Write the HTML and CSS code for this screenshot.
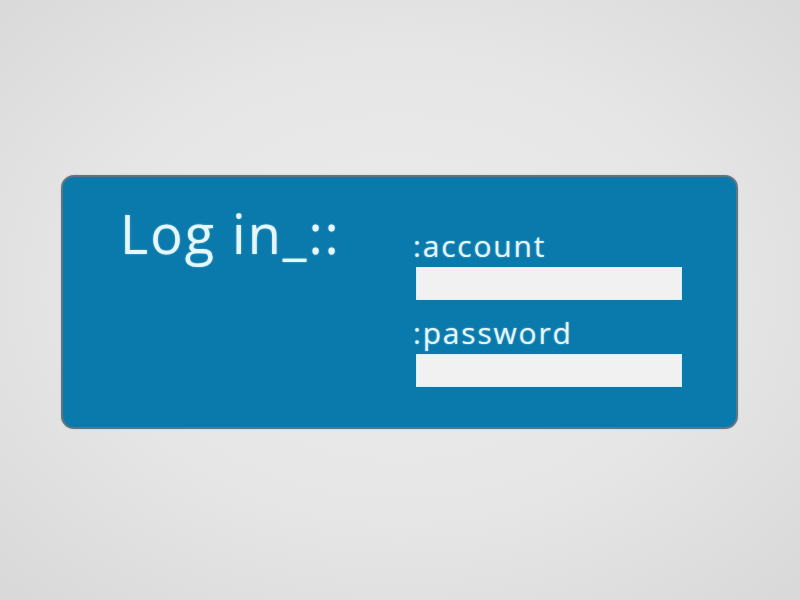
FILE: index.html
```html
<!DOCTYPE html>
<html>
<head>
<meta charset="utf-8">
<link rel="stylesheet" href="styles.css">
</head>
<body>
<main class="stage">
  <section class="card">
    <h1 class="title">Log in_::</h1>
    <form class="form">
      <label class="label">:account</label>
      <div class="field"></div>
      <label class="label label-second">:password</label>
      <div class="field"></div>
    </form>
  </section>
</main>
</body>
</html>
```
FILE: styles.css
```css
html, body {
  margin: 0;
  height: 100%;
}
body {
  background: radial-gradient(ellipse 70% 70% at 50% 48%, #ececec 0%, #e6e6e6 55%, #d9d9d9 100%);
  font-family: "Open Sans", "Noto Sans", sans-serif;
}
.stage {
  height: 600px;
  display: flex;
  align-items: flex-start;
  padding-top: 175px;
  padding-left: 61px;
  box-sizing: border-box;
}
.card {
  width: 677px;
  height: 254px;
  box-sizing: border-box;
  background: #0a79ab;
  border: 2px solid #5f7680;
  border-radius: 13px;
  display: flex;
  align-items: flex-start;
  padding: 26px 0 0 57px;
  box-shadow: 0 0 2px rgba(0,0,0,0.15);
}
.title {
  margin: 0;
  width: 296px;
  font-size: 54px;
  line-height: 60px;
  font-weight: 400;
  color: #e6f7fc;
  text-shadow: 0 0 2px rgba(190,235,255,0.6);
  letter-spacing: 2px;
  white-space: nowrap;
}
.form {
  margin: 25px 0 0 0;
  display: flex;
  flex-direction: column;
}
.label {
  font-size: 30px;
  line-height: 36px;
  font-weight: 400;
  color: #e6f7fc;
  text-shadow: 0 0 2px rgba(190,235,255,0.6);
  margin-left: -3px;
  letter-spacing: 1.8px;
  white-space: nowrap;
}
.label-second {
  margin-top: 15px;
}
.field {
  margin-top: 3px;
  width: 266px;
  height: 33px;
  box-sizing: border-box;
  background: #f2f1f2;
  border: 1px solid #d6f3fb;
}
```
